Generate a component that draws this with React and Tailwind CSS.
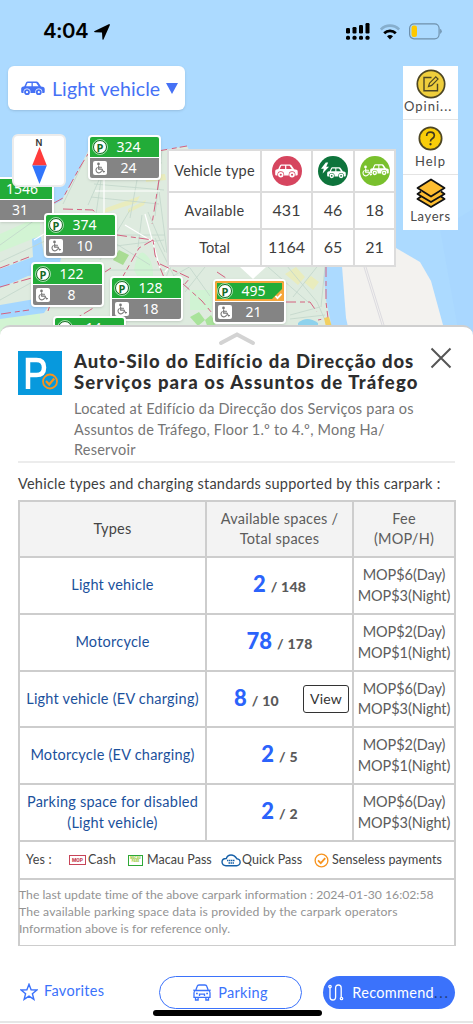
const markers = [
  { id: 1, spaces: '1546', disabled: '31', pos: 'left-0 top-[177px]', edge: true },
  { id: 2, spaces: '324', disabled: '24', pos: 'left-[88px] top-[135px]' },
  { id: 3, spaces: '374', disabled: '10', pos: 'left-[44px] top-[213px]' },
  { id: 4, spaces: '122', disabled: '8', pos: 'left-[31px] top-[262px]' },
  { id: 5, spaces: '128', disabled: '18', pos: 'left-[110px] top-[276px]' },
  { id: 6, spaces: '14', pos: 'left-[53px] top-[316px]' },
  { id: 7, spaces: '495', disabled: '21', pos: 'left-[213px] top-[279px]', active: true },
]

const rows = [
  { type: ['Light vehicle'], free: 2, total: 148, day: 6, night: 3, height: 'h-[57px]' },
  { type: ['Motorcycle'], free: 78, total: 178, day: 2, night: 1, height: 'h-[57px]' },
  { type: ['Light vehicle (EV charging)'], free: 8, total: 10, day: 6, night: 3, height: 'h-[56px]', view: true },
  { type: ['Motorcycle (EV charging)'], free: 2, total: 5, day: 2, night: 1, height: 'h-[57px]' },
  { type: ['Parking space for disabled', '(Light vehicle)'], free: 2, total: 2, day: 6, night: 3, height: 'h-[57px]' },
]

function Car({ className, hole = '#fff' }) {
  return (
    <svg viewBox="0 0 24 15" className={className}>
      <path fill="currentColor" d="M5.200 1.200Q5.700.4 6.700.4h8.900q1 0 1.600.8l2.800 4.300 2.400.6q1.300.4 1.300 1.800v3q0 1-1 1H1.200q-1 0-1-1V7.500Q.2 6.200 1.500 5.800l1.900-.5z" />
      <path fill={hole} d="M6.500 1.900h4v3.400H5zM11.800 1.900h3.400l2.300 3.400h-5.700z" />
      <circle cx="6" cy="11" r="3.500" fill={hole} />
      <circle cx="17.800" cy="11" r="3.500" fill={hole} />
      <circle cx="6" cy="11.200" r="2" fill="none" stroke="currentColor" strokeWidth="1.800" />
      <circle cx="17.800" cy="11.200" r="2" fill="none" stroke="currentColor" strokeWidth="1.800" />
    </svg>
  )
}

function Wheelchair({ className }) {
  return (
    <svg viewBox="0 0 16 16" className={className} fill="none" stroke="currentColor" strokeWidth="1.500" strokeLinecap="round" strokeLinejoin="round">
      <circle cx="6" cy="2.500" r="1" fill="currentColor" />
      <path d="M6.200 5v4.500h4.500l2 3.800 1.300-.6M6.500 7h3.500M4.300 7.500a3.800 3.800 0 1 0 5.700 4.500" />
    </svg>
  )
}

function CheckCircle({ className }) {
  return (
    <svg viewBox="0 0 16 16" className={className} fill="none" stroke="#f7931e">
      <circle cx="8" cy="8" r="6.800" strokeWidth="1.400" />
      <path d="M4.300 7.800l2.900 3 4.800-5.300" strokeWidth="1.900" />
    </svg>
  )
}

function Map() {
  return (
    <svg viewBox="0 0 473 340" className="absolute inset-0 h-[340px] w-[473px]">
      <rect width="473" height="340" fill="#acdaff" />
      <path d="M440 229l33-20v131h-13z" fill="#a6d6ff" opacity=".6" />
      <path d="M0 180h50l5 24 7-4 17-31 9-18 75-1 24-4 10 20h128v100l-1 12 2 22 4 18 3 22H0z" fill="#deebdf" />
      <path d="M342 240l54 8 24 14 11 19 12 44v15h-92l-5-22-4-52z" fill="#f3f2ef" />
      <path d="M0 234l40-18v20L0 252zM0 318l40-8v30H0z" fill="#d2f4d3" />
      <path d="M0 269l33-12 -1-18 9-3 3 20 17 2-3 14-30 4-28 12zM0 305l35-6 17 2-8 12-44 6z" fill="#a5d7ff" />
      <path d="M134 270q3-20 10-17 10 7 9 24l-12 6zM190 290h22v20h-22z" fill="#d0f3d3" />
      <path d="M119 250l10 5-6 10-10-5z" fill="#a9dc93" />
      <path d="M190 317l9-5 6 8-7 6zM205 320l6-5 5 9-8 4z" fill="#a9e39b" />
      <path d="M106 208l34-12-4 7-32 10zM128 209l18-9-2 5-16 8zM285 274l11-7 9 10-7 8zM304 282l7-6 8 6-6 8zM145 176l20-2 1 6-20 2z" fill="#e9ecbd" />
      <path d="M298 323q9-8 20 0v8h-20z" fill="#8ed2ed" />
      <g fill="none" stroke="#c2d6ca" strokeWidth=".8">
        <path d="M88 205l22-50M94 184l70 6M91 197l68 7M137 180l-7 38M101 180l-5 34M158 183l9 70M83 163l-20 41M83 235h82M84 250l80-10M100 260l30-50M142 215l-4 32M148 212l17 40M0 262l45-21M0 300l45-25M105 270h60M110 240l40 25M155 238l25 50M205 267l-20 25M166 280l45-25M190 268l20 28M0 245l35-25M177 250l-12 30M287 266l30 36 8 18M268 267l40 35M290 315l30-8M293 297l27-34M162 150l-7 66M112 159l50 4M325 267l-4 40M325 315l-35 4" />
      </g>
      <g fill="none" stroke="#fff" strokeWidth="1.200">
        <path d="M95 191h65M104 180v34M125 225l30 18M145 214l15 54M54 228l-20 12M180 254l-15 18" />
      </g>
      <path d="M364 267l18 58M366 267l18 58" fill="none" stroke="#dcdbe0" />
      <g fill="none" stroke="#d4607f" strokeWidth="1" strokeDasharray="10 4 5 3">
        <path d="M54 203l9-5 17-31 8-13M158 151l29-5M159 180l-7 44M63 209l30 1 10 12M117 235l36 5 2 15 10 25M153 240l-14 8-17 30M105 272l6-4M0 268l29-11M0 287l35-10M48 311l2-6M160 264l30 14-12 14M217 272l9 6M286 302h24l7 10M326 267v35l2 16-10 2M65 325l30-18M1 314l28-4M182 283l20 18 10 12" />
      </g>
      <path d="M324 318l5-1 3 10h-6z" fill="#f2cf60" />
    </svg>
  )
}

function Marker({ spaces, disabled, pos, active, edge }) {
  // the marker at the map's edge only shows its right part
  if (edge) {
    return (
      <div className={`absolute ${pos} h-[45px] w-[54px] rounded-r-[4px] border-2 border-l-0 border-white bg-white pb-px font-['Noto_Sans'] text-[14px] text-white shadow-sm`}>
        <div className="flex h-[20px] items-center bg-[#22ac38] pl-[6px] leading-none">{spaces}</div>
        <div className="mt-px flex h-[20px] items-center bg-[#848484] pl-[12px] leading-none">{disabled}</div>
      </div>
    )
  }
  return (
    <div className={`absolute ${pos} w-[73px] overflow-hidden rounded-[4px] border-2 border-white bg-white font-['Noto_Sans'] text-[14px] text-white shadow-sm`}>
      <div className={`relative flex h-[20px] items-center bg-[#22ac38] ${active ? 'border-2 border-[#f5a63b] pl-px pr-[7px]' : 'pl-[3px] pr-[9px]'}`}>
        <span className="flex size-[14px] shrink-0 items-center justify-center rounded-full border border-[#12681f] bg-white font-['Open_Sans'] text-[11px] font-bold leading-none text-[#176a26] outline outline-white/60">P</span>
        <span className="flex-1 text-center leading-none">{spaces}</span>
        {active && (
          <svg viewBox="0 0 12 12" className="absolute -bottom-px -right-px size-[12px]">
            <path d="M12 0v12H0z" fill="#f5a63b" />
            <path d="M4.500 8l2 2.200 4-4.400" fill="none" stroke="#fff" strokeWidth="1.800" />
          </svg>
        )}
      </div>
      {disabled && (
        <div className="mt-px flex h-[20px] items-center bg-[#848484] pl-[3px] pr-[9px]">
          <span className="flex size-[14px] shrink-0 items-center justify-center rounded-[2px] bg-white text-[#777]">
            <Wheelchair className="size-[12px]" />
          </span>
          <span className="flex-1 text-center leading-none">{disabled}</span>
        </div>
      )}
    </div>
  )
}

function StatusBar() {
  return (
    <div className="flex h-[66px] items-start justify-between pl-[43px] pr-[31px] pt-[23px]">
      <div className="flex h-[17px] items-center gap-[6px]">
        <span className="font-['Inter'] text-[20.500px] font-semibold leading-none tracking-[-0.600px]">4:04</span>
        <svg viewBox="0 0 16 16" className="size-[16px]">
          <path d="M15.800 1.200L9.600 15.200q-.8 1.300-1.200-.3L8 8.400 1 8.200q-1.600-.4-.3-1.200L14.700.2q1.400-.4 1.100 1z" />
        </svg>
      </div>
      <div className="flex h-[17px] items-center gap-[10px]">
        <svg viewBox="0 0 24 17" className="h-[17px] w-[24px]">
          <rect x="0" y="5" width="4" height="5.500" rx="1.200" />
          <rect x="6.500" y="4" width="4" height="6.500" rx="1.200" />
          <rect x="13" y="2" width="4" height="8.500" rx="1.200" />
          <rect x="19.500" y="0" width="4" height="10.500" rx="1.200" />
          <rect x="0" y="12.800" width="4" height="4" rx="1.500" />
          <rect x="6.500" y="12.800" width="4" height="4" rx="1.500" />
          <rect x="13" y="12.800" width="4" height="4" rx="1.500" />
          <rect x="19.500" y="12.800" width="4" height="4" rx="1.500" />
        </svg>
        <svg viewBox="0 0 20 16" className="h-[16px] w-[20px]" fill="none" strokeWidth="2.700">
          <path d="M.8 5.500a13 13 0 0 1 18.400 0" stroke="#86aecd" />
          <path d="M4.200 9.300a8.200 8.200 0 0 1 11.600 0" stroke="#000" />
          <path d="M10 15.400l-3-3.200q3-2.400 6 0z" fill="#000" />
        </svg>
        <svg viewBox="0 0 33 17" className="ml-[-1px] h-[17px] w-[33px]">
          <rect x=".6" y=".8" width="29.500" height="15" rx="4.500" fill="none" stroke="#6f90ab" strokeWidth="1.200" />
          <rect x="2.500" y="2.600" width="5.500" height="11.400" rx="2.200" fill="#ffc800" />
          <path d="M31.200 5.700q1.500.7 1.500 2.600t-1.500 2.600z" fill="#6f90ab" />
        </svg>
      </div>
    </div>
  )
}

function SideMenu() {
  return (
    <div className="w-[55px] bg-white text-[13px] text-[#4a4a4a]">
      <div className="flex h-[54px] flex-col items-center border-b border-[#e4e4e4] pt-[3px]">
        <svg viewBox="0 0 30 30" className="size-[30px]">
          <circle cx="15" cy="15" r="13.700" fill="#efce3c" stroke="#4d4624" strokeWidth="1.700" />
          <path d="M15.500 8.500H8v13.300h13.500v-7" fill="none" stroke="#4d4624" strokeWidth="1.400" />
          <path d="M12.500 17.500l1-3.300 6.300-6.300 2.200 2.200-6.300 6.300z" fill="none" stroke="#4d4624" strokeWidth="1.200" />
        </svg>
        <span className="w-full pl-px text-left leading-[15px] tracking-[1px]">Opini...</span>
      </div>
      <div className="flex h-[55px] flex-col items-center border-b border-[#e4e4e4] pt-[6px]">
        <svg viewBox="0 0 26 26" className="size-[25px]">
          <circle cx="13" cy="13" r="11.600" fill="#f9cd08" stroke="#4d4624" strokeWidth="1.800" />
          <path d="M9 10.300q0-4 4-4t4 3.600q0 2-2.300 3.300-1.700 1-1.700 2.800" fill="none" stroke="#3e3820" strokeWidth="1.700" />
          <circle cx="13" cy="19" r="1.200" fill="#3e3820" />
        </svg>
        <span className="mt-[3px] leading-[15px] tracking-[1px]">Help</span>
      </div>
      <div className="flex h-[55px] flex-col items-center pt-[3px]">
        <svg viewBox="0 0 30 30" className="size-[30px]" fill="#fdbd30" stroke="#111" strokeWidth="1.800" strokeLinejoin="round">
          <path d="M5 18.500L1.500 21 15 29l13.500-8-3.500-2.500" />
          <path d="M5 13.500L1.500 16 15 24l13.500-8-3.500-2.500" />
          <path d="M15 1.500L28.500 10 15 18.500 1.500 10z" />
        </svg>
        <span className="mt-[1px] leading-[15px] tracking-[0.600px]">Layers</span>
      </div>
    </div>
  )
}

function Summary() {
  const cell = 'flex items-center justify-center border-b-2 border-r-2 border-[#dcdcdc]'
  return (
    <div className="absolute left-[167px] top-[149px] w-[229px]">
      <div className="grid grid-cols-[93px_51px_42px_41px] grid-rows-[42px_37px_37px] border-l-2 border-t-2 border-[#dcdcdc] bg-white text-[16px] text-[#3d3d3d]">
        <div className={`${cell} text-[14.500px] tracking-[0.200px]`}>Vehicle type</div>
        <div className={cell}>
          <span className="flex size-[30px] items-center justify-center rounded-full bg-[#d6455f] text-white">
            <Car className="w-[23px]" hole="#d6455f" />
          </span>
        </div>
        <div className={cell}>
          <span className="relative flex size-[30px] shrink-0 items-center justify-center rounded-full bg-[#0e743c] text-white">
            <Car className="ml-[7px] mt-[4px] w-[19px]" hole="#0e743c" />
            <svg viewBox="0 0 10 14" className="absolute left-[3px] top-[6px] h-[12px] w-[8px]">
              <path d="M6 0L0 8h3.500L2 14l8-8.500H6.500L9 0z" fill="#fff" />
            </svg>
          </span>
        </div>
        <div className={cell}>
          <span className="relative flex size-[30px] shrink-0 items-center justify-center rounded-full bg-[#79c02d] text-white">
            <Car className="mb-[2px] ml-[9px] w-[19px]" hole="#79c02d" />
            <Wheelchair className="absolute left-[1px] top-[9px] size-[12px]" />
          </span>
        </div>
        <div className={`${cell} text-[14.500px] tracking-[0.300px]`}>Available</div>
        <div className={`${cell} pb-[2px]`}>431</div>
        <div className={`${cell} pb-[2px]`}>46</div>
        <div className={`${cell} pb-[2px]`}>18</div>
        <div className={`${cell} text-[14.500px]`}>Total</div>
        <div className={`${cell} pb-[2px]`}>1164</div>
        <div className={`${cell} pb-[2px]`}>65</div>
        <div className={`${cell} pb-[2px]`}>21</div>
      </div>
      <svg viewBox="0 0 26 13" className="ml-[73px] h-[13px] w-[26px]">
        <path d="M0 0h26L13 12z" fill="#fff" />
      </svg>
    </div>
  )
}

function Sheet() {
  return (
    <div className="relative -mt-px h-[699px] rounded-t-[10px] border-t-2 border-[#cfcfcf] bg-white px-[18px]">
      <svg viewBox="0 0 40 14" className="mx-auto mt-[5px] h-[14px] w-[40px]">
        <path d="M4 11l16-8.500L36 11" fill="none" stroke="#d3d3d3" strokeWidth="4" strokeLinecap="round" />
      </svg>
      <div className="mt-[5px] flex h-[112px] border-b-2 border-[#ececec]">
        <svg viewBox="0 0 44 44" className="size-[44px] shrink-0">
          <rect width="44" height="44" fill="#0799dd" />
          <path d="M10 38V9h8.500q7.500 0 7.500 7.500T18.500 24H12" fill="none" stroke="#fff" strokeWidth="4.500" />
          <circle cx="32" cy="30.500" r="7" fill="#0799dd" stroke="#f7931e" strokeWidth="1.800" />
          <path d="M28 30l3.200 3.500 5-6" fill="none" stroke="#f7931e" strokeWidth="2.200" />
        </svg>
        <div className="ml-[12px] whitespace-nowrap">
          <h1 className="text-[18.500px] font-black leading-[21px] text-[#2e2e2e]">
            <span className="block tracking-[0.930px]">Auto-Silo do Edifício da Direcção dos</span>
            <span className="block tracking-[1.120px]">Serviços para os Assuntos de Tráfego</span>
          </h1>
          <p className="mt-[6px] text-[14.500px] leading-[20.700px] tracking-[0.220px] text-[#757575]">
            Located at Edifício da Direcção dos Serviços para os<br />
            Assuntos de Tráfego, Floor 1.º to 4.º, Mong Ha/<br />
            Reservoir
          </p>
        </div>
        <svg viewBox="0 0 22 22" className="absolute right-[21px] top-[20px] size-[22px]">
          <path d="M1.500 1.500l19 19M20.500 1.500l-19 19" stroke="#555" strokeWidth="2" />
        </svg>
      </div>
      <p className="mt-[10px] h-[27px] whitespace-nowrap text-[14.500px] leading-[22px] tracking-[0.240px] text-[#3e3e3e]">Vehicle types and charging standards supported by this carpark :</p>

      <div className="w-[438px] border-2 border-b border-[#cdcdcd] text-[14.500px] leading-[20.500px] tracking-[0.230px]">
        <div className="grid h-[56px] grid-cols-[187px_147px_100px] border-b-2 border-[#cdcdcd] bg-[#f3f3f3] text-center text-[#5c5c5c]">
          <div className="flex items-center justify-center border-r-2 border-[#cdcdcd] text-[#444]">Types</div>
          <div className="flex items-center justify-center border-r-2 border-[#cdcdcd]">Available spaces /<br />Total spaces</div>
          <div className="flex items-center justify-center">Fee<br />(MOP/H)</div>
        </div>
        {rows.map((row, i) => (
          <div key={i} className={`grid ${row.height} grid-cols-[187px_147px_100px] border-b-2 border-[#cdcdcd] text-center`}>
            <div className="flex flex-col justify-center whitespace-nowrap border-r-2 border-[#cdcdcd] text-[#1b519c]">
              {row.type.map(line => <div key={line}>{line}</div>)}
            </div>
            <div className={`flex items-center border-r-2 border-[#cdcdcd] ${row.view ? 'justify-between pl-[27px] pr-[3px]' : 'justify-center'}`}>
              <div className="flex items-baseline gap-[5px] pt-px text-[14px] font-black text-[#5a5a5a]">
                <span className="text-[22px] tracking-normal text-[#2b63fb]">{row.free}</span>
                <span>/ {row.total}</span>
              </div>
              {row.view && (
                <button className="h-[28px] w-[46px] rounded-[3px] border-[1.500px] border-[#333] text-[14px] leading-none text-[#333]">View</button>
              )}
            </div>
            <div className="flex flex-col justify-center whitespace-nowrap tracking-[-0.080px] text-[#5c5c5c]">
              <div>MOP${row.day}(Day)</div>
              <div>MOP${row.night}(Night)</div>
            </div>
          </div>
        ))}
        <div className="flex h-[38px] items-center whitespace-nowrap border-b-2 border-[#cdcdcd] pl-[6px] text-[12.500px] text-[#444]">
          <span className="w-[43px]">Yes :</span>
          <span className="flex h-[10px] w-[17px] items-center justify-center border border-[#c74458] font-['Roboto'] text-[5px] font-black leading-none tracking-normal text-[#c74458]">MOP</span>
          <span className="ml-[2px] w-[40px]">Cash</span>
          <span className="flex h-[11px] w-[15px] flex-col items-center justify-center border-[1.500px] border-[#2ea836] font-['Roboto'] text-[3px] font-black leading-[3px] tracking-normal text-[#9bcb3c]">
            <span>MACAU</span>
            <span>PASS</span>
          </span>
          <span className="ml-[4px] w-[74px] tracking-[0.050px]">Macau Pass</span>
          <svg viewBox="0 0 20 13" className="h-[13px] w-[20px]">
            <path d="M5 11.700h10.500a3.500 3.500 0 0 0 .3-7Q13.500 1 10 1 6.500 1 5.300 4.500 1.300 4.300 1 8q.3 3.500 4 3.700z" fill="none" stroke="#1660a8" strokeWidth="1.400" />
            <path d="M6 6.500h8M7.500 9h5.500" stroke="#1660a8" strokeWidth="1.700" strokeDasharray="1.500 .5" />
          </svg>
          <span className="ml-px w-[72px] tracking-[0.050px]">Quick Pass</span>
          <CheckCircle className="size-[15px]" />
          <span className="ml-[3px] tracking-[0.050px]">Senseless payments</span>
        </div>
        <div className="-ml-px h-[65px] whitespace-nowrap pt-[6px] text-[12.200px] leading-[17px] text-[#939393]">
          <p className="tracking-[0.010px]">The last update time of the above carpark information : 2024-01-30 16:02:58</p>
          <p className="tracking-[0.160px]">The available parking space data is provided by the carpark operators</p>
          <p className="tracking-[0.040px]">Information above is for reference only.</p>
        </div>
      </div>

      <div className="mt-[30px] flex h-[33px] items-center text-[14.500px] tracking-[0.300px] text-[#3b72fb]">
        <div className="flex w-[141px] items-center gap-[6px] pb-[2px] pl-[2px]">
          <svg viewBox="0 0 18 18" className="size-[18px]">
            <path d="M9 1.300l2.100 5.400 5.800.3-4.500 3.700 1.500 5.700L9 13.200l-4.900 3.200 1.500-5.700L1.100 7l5.800-.3z" fill="none" stroke="currentColor" strokeWidth="1.400" />
          </svg>
          <span className="leading-none">Favorites</span>
        </div>
        <button className="flex h-[33px] w-[144px] items-center justify-center gap-[7px] rounded-full border-[1.500px] border-[#3b72fb]">
          <svg viewBox="0 0 18 17" className="h-[17px] w-[18px]" fill="none" stroke="currentColor" strokeWidth="1.300">
            <path d="M2.700 6.500l1.500-4.200Q4.600 1 6 1h6q1.400 0 1.800 1.300l1.500 4.200M2.700 6.500h12.600q1.700.5 1.700 2.300v4.500H1V8.800q0-1.800 1.700-2.300zM.3 6.200l2 .3M17.700 6.200l-2 .3M2.500 13.500V16h2.600v-2.500M12.900 13.500V16h2.600v-2.500M6.500 12v-1.800h5V12" />
            <path d="M3 9.500h1.800M13.200 9.500H15" />
          </svg>
          <span>Parking</span>
        </button>
        <button className="ml-[21px] flex h-[33px] w-[132px] items-center gap-[8px] rounded-full bg-[#3b72fb] pl-[5px] text-white">
          <svg viewBox="0 0 16 17" className="h-[17px] w-[16px] shrink-0" fill="none" stroke="currentColor" strokeWidth="1.300">
            <circle cx="2" cy="2.500" r="1.200" />
            <path d="M2 4v9q0 3 2.800 3t2.800-3V4q0-3 2.800-3t2.800 3v9" />
            <circle cx="13.500" cy="14.500" r="1.200" />
          </svg>
          <span className="tracking-[0.300px]">Recommend<span className="tracking-[1.800px] text-[#243d7a]">...</span></span>
        </button>
      </div>
      <div className="mx-auto mt-px h-[6px] w-[169px] translate-x-px rounded-full bg-black" />
      <div className="-mx-[18px] mt-[5px] h-[2px] bg-[#e6e6e6]" />
    </div>
  )
}

export default function App() {
  return (
    <div className="h-[1024px] w-[473px] overflow-hidden bg-white font-['Lato','Noto_Sans',sans-serif]">
      <div className="relative h-[326px]">
        <Map />
        {markers.map(m => <Marker key={m.id} {...m} />)}
        <div className="relative">
          <StatusBar />
          <div className="flex items-start justify-between pl-[8px] pr-[15px]">
            <button className="flex h-[44px] w-[177px] items-center rounded-[6px] bg-white pl-[13px] text-[19.500px] text-[#4571f5] shadow">
              <Car className="w-[24px]" />
              <span className="ml-[7px] mt-px whitespace-nowrap leading-none tracking-[0.100px]">Light vehicle</span>
              <svg viewBox="0 0 12 11" className="ml-[6px] h-[11px] w-[12px]">
                <path d="M0 0h12L6 11z" fill="currentColor" />
              </svg>
            </button>
            <SideMenu />
          </div>
        </div>
        <div className="absolute left-[12px] top-[134px] flex h-[53px] w-[54px] flex-col items-center rounded-[6px] border-2 border-[#ececec] bg-white pt-[2px]">
          <span className="font-['Inter'] text-[9px] font-semibold leading-[9px] text-[#333]">N</span>
          <svg viewBox="0 0 15 38" className="h-[37px] w-[15px]">
            <path d="M7.500 0L15 19H0z" fill="#ff3b3b" />
            <path d="M0 19h15L7.500 38z" fill="#3175fb" />
          </svg>
        </div>
        <Summary />
      </div>
      <Sheet />
    </div>
  )
}
